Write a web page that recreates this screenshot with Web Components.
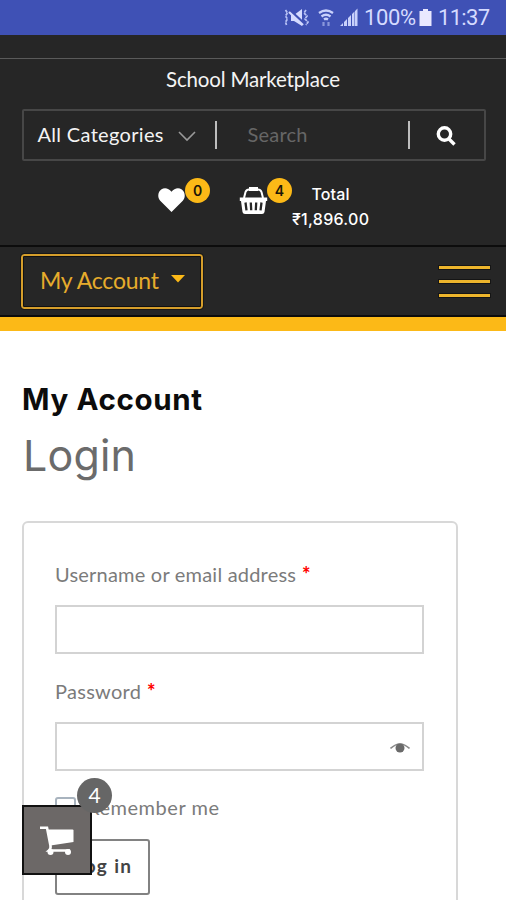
<!DOCTYPE html>
<html lang="en">
<head>
<meta charset="utf-8">
<title>School Marketplace</title>
<style>
html,body{margin:0;height:100%;overflow:hidden;background:#fff}
body{font-family:Lato,"Noto Sans",sans-serif}
</style>
</head>
<body>
<market-app></market-app>
<script>
const define = (name, html, after) => customElements.define(name, class extends HTMLElement {
  connectedCallback() {
    if (this.shadowRoot) return;
    this.attachShadow({ mode: 'open' }).innerHTML = html;
    if (after) after(this);
  }
});

/* A single line of text, tracked so that it spans the given width. */
define('fit-text', `<style>
:host{display:block;white-space:nowrap;flex:none}
span{display:inline-block}
</style><span><slot></slot></span>`, el => {
  const w = +el.getAttribute('width');
  const span = el.shadowRoot.querySelector('span');
  const n = el.textContent.length;
  if (w && n > 1) {
    const gap = (w - span.getBoundingClientRect().width) / (n - 1);
    span.style.letterSpacing = gap + 'px';
    span.style.marginRight = -gap + 'px';
  }
});

define('status-bar', `<style>
:host{display:flex;height:35px;box-sizing:border-box;background:#3f51b5;color:#d5dbff;align-items:center;justify-content:flex-end;padding-right:16px;font:22px/35px Roboto,sans-serif}
svg{display:block;flex:none}
</style>
<svg width="28" height="20" viewBox="0 0 28 20" fill="none" stroke="#b9c3f6" stroke-width="1.700"><path d="M3.500 2l2 3-2 3 2 3-2 3 1 3M24 2l-2 3 3 3-2 3 3 3-2 3" stroke-dasharray="3 .7"/><path d="M9 7h3l8-6v17l-8-5H9z" fill="#d5dbff" stroke="none"/><path d="M8 3l14 13" stroke="#3f51b5" stroke-width="3.500"/><path d="M7 4l14 13" stroke="#d5dbff" stroke-width="2.200"/></svg>
<svg width="18" height="20" viewBox="0 0 18 20" style="margin:0 5px 0 7px" fill="none" stroke="#c9d1fb" stroke-width="2.300"><path d="M2 5q7-5 14 0M4.500 8.500q4.500-3.500 9 0M7 11.500q2-1.500 4 0"/><path d="M6.500 14v4M11.500 14v4" stroke-width="2.200" opacity=".55"/></svg>
<svg width="18" height="20" viewBox="0 0 18 20" style="margin-right:6px" fill="#c9d1fb"><path d="M0 18l3-3v3zM4 14l3-3v7H4zM8 10l3-3v11H8zM12 6l2.500-2.500V18H12zM15 3l2.500-2.500V18H15z"/></svg>
<fit-text width="52">100%</fit-text>
<svg width="13" height="20" viewBox="0 0 13 20" style="margin:0 6px 0 3px" fill="#e9e8ff"><path d="M4 1h5v2h3.500v15H.5V3H4z"/></svg>
<fit-text width="52">11:37</fit-text>`);

define('search-box', `<style>
:host{display:flex;align-items:center;box-sizing:border-box;width:464px;height:52px;border:2px solid #474747;border-radius:2px;font-size:20px;color:#f4f4f4;padding-left:14px}
fit-text{margin-top:-2px}
svg{display:block;flex:none}
i{width:2px;height:28px;background:#bdbdbd;flex:none}
.q{color:#666}
</style>
<fit-text width="126">All Categories</fit-text>
<svg width="18" height="12" viewBox="0 0 18 12" style="margin:2px 19px 0 14px" fill="none" stroke="#999" stroke-width="1.600"><path d="M1 2l8 8 8-8"/></svg>
<i></i><fit-text class="q" width="60" style="margin:-2px 100px 0 31px">Search</fit-text><i></i>
<svg width="20" height="20" viewBox="0 0 20 20" style="margin:2px 0 0 26px" fill="none" stroke="#fff" stroke-width="3.400"><circle cx="8.500" cy="8" r="6.200"/><path d="M12.500 12.500l6 6"/></svg>`);

define('count-badge', `<style>
:host{display:flex;align-items:center;justify-content:center;width:25px;height:25px;border-radius:50%;background:#fcb917;color:#1c1708;font:600 14px/25px Inter,sans-serif}
</style><slot></slot>`);

define('shop-status', `<style>
:host{display:flex;align-items:flex-start;padding-left:158px;color:#fff}
svg{display:block;flex:none}
.sum{display:flex;flex-direction:column;align-items:center;font:500 16px/25px Inter,sans-serif;padding-top:4px}
</style>
<svg width="27" height="24" viewBox="0 0 27 24" style="margin-top:10px" fill="#fff"><path d="M13.500 24L2.200 12.700C-.8 9.500-.2 3.800 3.200 1.500 6.800-.8 10.700.4 13.500 3.700 16.300.4 20.200-.8 23.800 1.500c3.400 2.300 4 8 1 11.200z"/></svg>
<count-badge>0</count-badge>
<svg width="29" height="28" viewBox="0 0 29 28" style="margin:9px 0 0 29px"><path d="M5 11l1.500-6q1-2.500 3.500-2.500h9q2.500 0 3.500 2.500l1.500 6" fill="none" stroke="#fff" stroke-width="2"/><path d="M10 0h9v4h-9z" fill="#fff"/><path d="M.8 10.500h27.400v3.600H27L25.500 25q-.4 2-2.500 2H6q-2.100 0-2.500-2L2 14.100H.8z" fill="#fff"/><path d="M6.500 15.500l1 7.800M11.800 15.500l.4 7.800M17.200 15.500l-.4 7.800M22.500 15.500l-1 7.800" stroke="#262626" stroke-width="2.300"/></svg>
<count-badge style="margin-left:-1px">4</count-badge>
<div class="sum"><fit-text width="38">Total</fit-text><fit-text width="77">₹1,896.00</fit-text></div>`);

define('nav-bar', `<style>
:host{display:flex;align-items:flex-start;justify-content:space-between;box-sizing:border-box;height:72px;border-top:2px solid #0c0c0c;border-bottom:2px solid #0c0c0c;background:#262626;padding:7px 16px 0 21px}
.btn{display:flex;align-items:center;box-sizing:border-box;width:182px;height:55px;border:2px solid #d59e2b;border-radius:3px;color:#e6ac2c;font-size:23px;padding-left:17px;outline:1px solid #171717;box-shadow:inset 0 0 0 1px #111}
.btn fit-text{margin-top:-3px}
.btn svg{margin:-5px 0 0 12px}
.menu{display:flex;flex-direction:column;gap:11px;padding-top:12px}
.menu b{display:block;width:51px;height:3px;background:#edb52c;box-shadow:0 0 0 1px #151515}
</style>
<div class="btn"><fit-text width="119">My Account</fit-text><svg width="14" height="8" viewBox="0 0 14 8"><path d="M0 0h14L7 7.500z" fill="#fcb917"/></svg></div>
<div class="menu"><b></b><b></b><b></b></div>`);

define('form-field', `<style>
:host{display:block;height:116.500px}
.l{display:flex;gap:6px;height:42px;font-size:20px;line-height:22px;color:#7b7b7b}
em{font-style:normal;color:#f00;font-weight:900}
.box{display:flex;align-items:center;justify-content:flex-end;box-sizing:border-box;width:369px;height:49px;border:2px solid #d3d3d3;padding-right:12px}
</style><div class="l"><fit-text></fit-text><em>*</em></div><div class="box"><slot></slot></div>`, el => {
  const old = el.shadowRoot.querySelector('fit-text');
  const t = document.createElement('fit-text');
  t.textContent = el.getAttribute('label');
  t.setAttribute('width', el.getAttribute('label-width'));
  old.replaceWith(t);
});

define('login-form', `<style>
:host{display:block;box-sizing:border-box;width:436px;height:420px;margin-left:21.500px;border:2px solid #d8d8d8;border-radius:6px;padding:40px 0 0 31.500px}
.r{display:flex;align-items:center;gap:11px;height:22px;font-size:20px;line-height:22px;color:#7b7b7b}
.r i{box-sizing:border-box;width:21px;height:21px;border:2px solid #a8b3be;border-radius:3px}
.go{display:flex;align-items:center;justify-content:center;box-sizing:border-box;width:95px;height:56px;margin-top:21px;border:2px solid #828282;border-radius:3px;color:#444;font-size:19px;font-weight:700}
.go fit-text{margin-top:-4px}
</style>
<form-field label="Username or email address" label-width="241"></form-field>
<form-field label="Password" label-width="86"><svg width="20" height="10" viewBox="0 0 20 10" style="margin-top:4px"><path d="M.5 5.500q9.500-9 19 0" fill="none" stroke="#888" stroke-width="1.600"/><circle cx="10" cy="5" r="4.500" fill="#6a6a6a"/></svg></form-field>
<div class="r"><i></i><fit-text width="132">Remember me</fit-text></div>
<div class="go"><fit-text width="57">Log in</fit-text></div>`);

define('cart-button', `<style>
:host{position:absolute;left:22px;top:805px;width:70px;height:70px;box-sizing:border-box;border:2px solid #111;background:#6c6867;display:flex;align-items:center;justify-content:center}
.n{position:absolute;left:53px;top:-29px;width:35px;height:35px;border-radius:50%;background:#666;color:#fff;text-align:center;font-size:21px;line-height:34px}
</style>
<svg width="34" height="29" viewBox="0 0 34 29" style="margin-top:1px"><path d="M0 1.800h7l3.500 18q.5 3-1.500 4.700h21" fill="none" stroke="#fff" stroke-width="2.600"/><path d="M7 3.500h25.500q1 0 1 1v11.500L10.500 19.500z" fill="#fff"/><circle cx="10.500" cy="26" r="3" fill="#fff"/><circle cx="28" cy="26" r="3" fill="#fff"/></svg>
<div class="n">4</div>`);

define('market-app', `<style>
:host{display:block;position:relative;width:506px;height:900px;overflow:hidden;background:#fff}
header{display:flex;flex-direction:column;background:#262626;height:210px}
.rule{height:22px;border-bottom:1.500px solid #5a5a5a;padding-bottom:.5px}
.brand{align-self:center;color:#f4f4f4;font-size:20.500px;line-height:24px;margin:8px 0 18px}
search-box{margin:0 0 17px 21.500px}
.gold{height:14px;background:#fcb917}
.title{margin:51px 0 0 22px;font:700 29.500px/34px Inter,sans-serif;color:#0c0c0c}
.sub{margin:13px 0 40px 23px;font:400 43px/52px Inter,sans-serif;color:#6b6b6b}
</style>
<status-bar></status-bar>
<header><div class="rule"></div><fit-text class="brand" width="174">School Marketplace</fit-text><search-box></search-box><shop-status></shop-status></header>
<nav-bar></nav-bar><div class="gold"></div>
<fit-text class="title" width="180">My Account</fit-text>
<fit-text class="sub" width="113">Login</fit-text>
<login-form></login-form>
<cart-button></cart-button>`);
</script>
</body>
</html>
